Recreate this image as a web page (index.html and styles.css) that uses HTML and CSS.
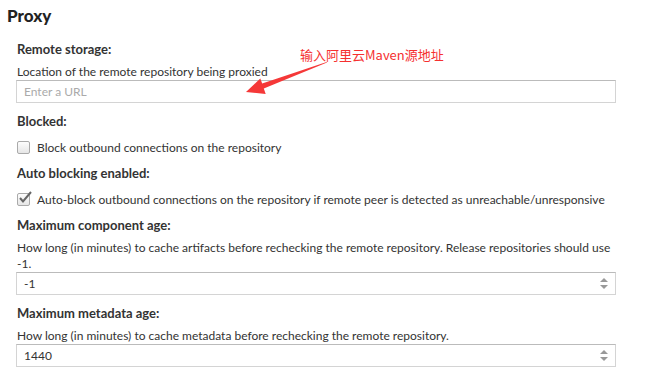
FILE: index.html
```html
<!DOCTYPE html>
<html lang="en">
<head>
    <meta charset="UTF-8">
    <title>Proxy</title>
    <link rel="stylesheet" href="styles.css">
</head>
<body>
    <div class="page">
        <h2 class="section-title">Proxy</h2>

        <div class="form">
            <div class="field">
                <div class="field-label">Remote storage:</div>
                <div class="field-help">Location of the remote repository being proxied</div>
                <input class="text-input" type="text" placeholder="Enter a URL">
            </div>

            <div class="field">
                <div class="field-label">Blocked:</div>
                <label class="check-row">
                    <span class="check-box"></span>
                    Block outbound connections on the repository
                </label>
            </div>

            <div class="field">
                <div class="field-label">Auto blocking enabled:</div>
                <label class="check-row">
                    <span class="check-box">
                        <svg width="15" height="13" viewBox="0 0 15 13"><path d="M2 7 L5 10.5 L13 1" fill="none" stroke="#666" stroke-width="2"/></svg>
                    </span>
                    Auto-block outbound connections on the repository if remote peer is detected as unreachable/unresponsive
                </label>
            </div>

            <div class="field">
                <div class="field-label">Maximum component age:</div>
                <div class="field-help">How long (in minutes) to cache artifacts before rechecking the remote repository. Release repositories should use -1.</div>
                <div class="number-input">
                    <input class="text-input" type="text" value="-1">
                    <span class="spinner"><i class="up"></i><i class="down"></i></span>
                </div>
            </div>

            <div class="field">
                <div class="field-label">Maximum metadata age:</div>
                <div class="field-help">How long (in minutes) to cache metadata before rechecking the remote repository.</div>
                <div class="number-input">
                    <input class="text-input" type="text" value="1440">
                    <span class="spinner"><i class="up"></i><i class="down"></i></span>
                </div>
            </div>
        </div>

        <!-- screenshot annotation -->
        <div class="note">输入阿里云Maven源地址</div>
        <svg class="note-arrow" width="657" height="386" viewBox="0 0 657 386">
            <polygon points="327,62.5 263.8,88.4 265.7,94 246,92 260.3,78.5 262.2,83.6 326.6,62" fill="#f53838"/>
        </svg>
    </div>
</body>
</html>
```

FILE: styles.css
```css
body {
    margin: 0;
    background-color: #fff;
    color: #333;
    font-family: Lato, "Open Sans", sans-serif;
}

.page {
    position: relative;
    width: 657px;
    height: 386px;
    overflow: hidden;
}

.section-title {
    margin: 0;
    padding: 6px 0 0 7px;
    font-size: 17px;
    line-height: 20px;
    font-weight: 900;
    color: #222;
}

.form {
    width: 600px;
    padding: 15px 0 0 16px;
}

.field {
    margin-bottom: 10px;
}

.field-label {
    padding-left: 1px;
    font-size: 13px;
    line-height: 16px;
    font-weight: bold;
    color: #333;
    margin-bottom: 7px;
}

.field-help {
    padding-left: 1px;
    font-size: 12px;
    line-height: 16px;
    color: #333;
}

.text-input {
    display: block;
    box-sizing: border-box;
    width: 600px;
    height: 23px;
    margin: 0;
    padding: 0 7px;
    border: 1px solid #d4d4d4;
    border-top-color: #bbb;
    border-radius: 0;
    font-family: inherit;
    font-size: 12px;
    color: #333;
    outline: none;
}

.text-input::placeholder {
    color: #aaa;
}

.check-row {
    display: flex;
    align-items: center;
    gap: 7px;
    height: 16px;
    margin-top: 10px;
    padding-left: 1px;
    font-size: 12px;
    color: #333;
}

.check-box {
    position: relative;
    box-sizing: border-box;
    width: 13px;
    height: 13px;
    border: 1px solid #aaa;
    border-radius: 2px;
    background: linear-gradient(#fdfdfd, #e6e6e6);
}

.check-box svg {
    position: absolute;
    left: 0;
    top: -3px;
}

.number-input {
    position: relative;
    width: 600px;
}

.spinner {
    position: absolute;
    right: 8px;
    top: 6px;
    display: flex;
    flex-direction: column;
    gap: 3px;
}

.spinner i {
    width: 0;
    height: 0;
    border-left: 4px solid transparent;
    border-right: 4px solid transparent;
}

.spinner .up {
    border-bottom: 4px solid #999;
}

.spinner .down {
    border-top: 4px solid #999;
}

.note {
    position: absolute;
    left: 300px;
    top: 46px;
    font-family: "Noto Sans CJK SC", sans-serif;
    font-size: 13px;
    line-height: 17px;
    color: #f53030;
}

.note-arrow {
    position: absolute;
    left: 0;
    top: 0;
    pointer-events: none;
}
```
